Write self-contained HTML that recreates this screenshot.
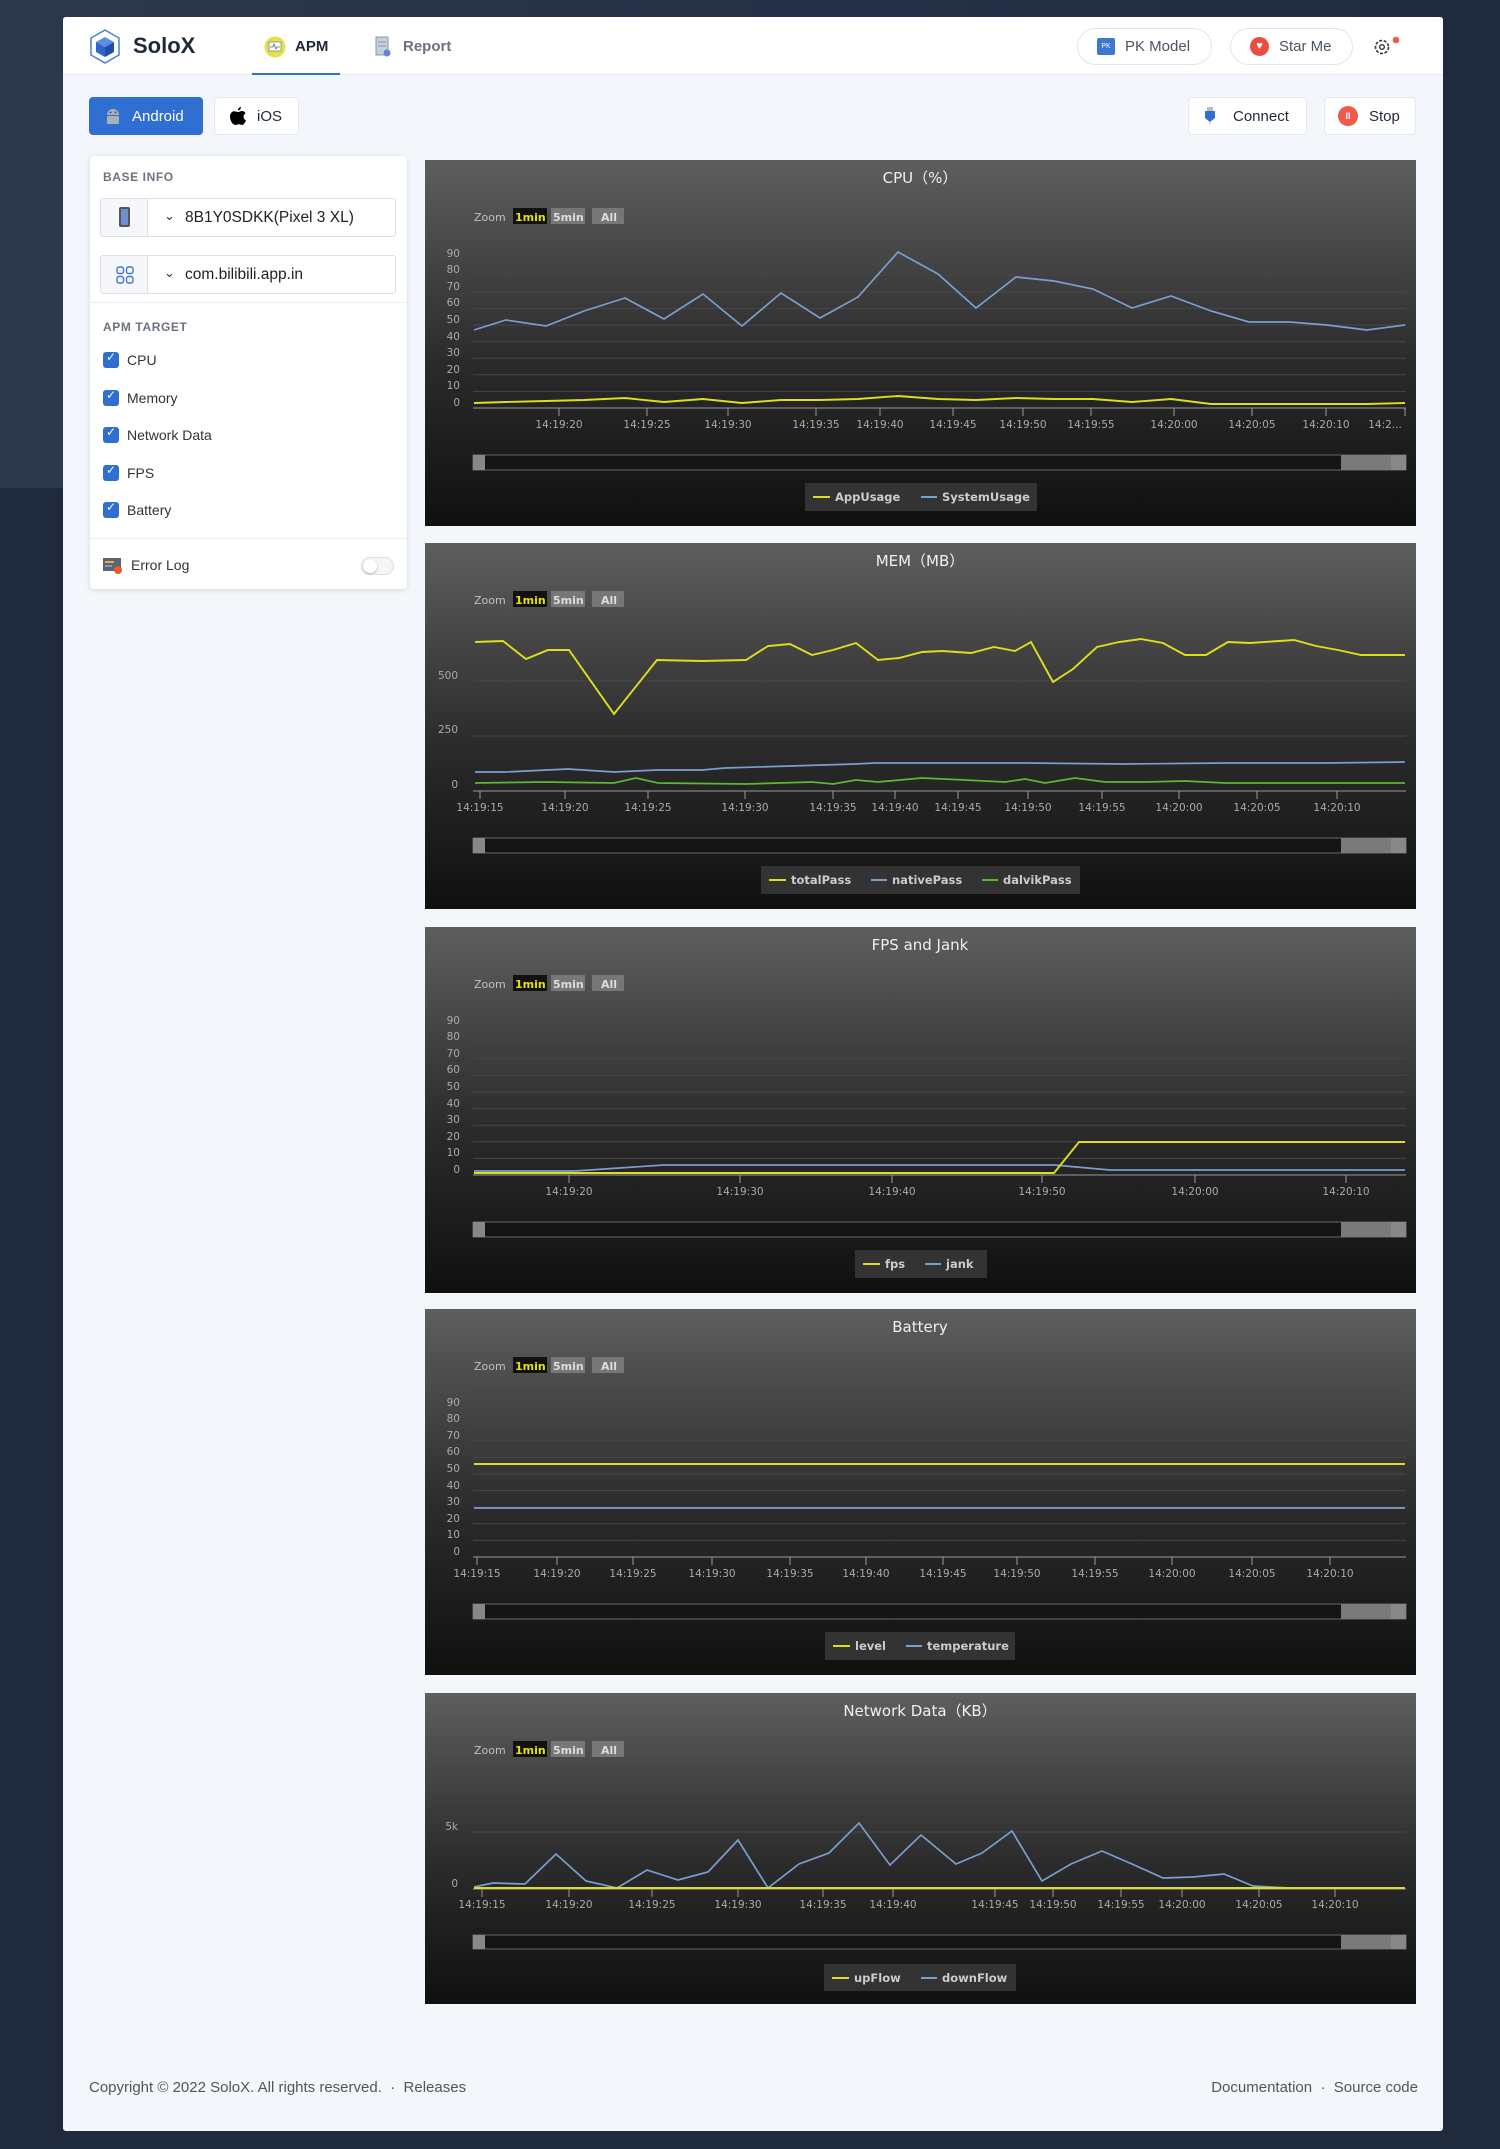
<!DOCTYPE html>
<html><head><meta charset="utf-8"><style>
*{margin:0;padding:0;box-sizing:border-box}
body{width:1500px;height:2149px;background:#1f2a3d;font-family:"Liberation Sans",sans-serif;position:relative;overflow:hidden}
.a{position:absolute}
.card{left:63px;top:17px;width:1380px;height:2114px;background:#f3f6fa;border-radius:3px}
.hdr{left:63px;top:17px;width:1380px;height:58px;background:#fff;border-bottom:1px solid #e8ecf1;border-radius:3px 3px 0 0}
.pill{border:1px solid #e2e5ea;border-radius:19px;background:#fff;height:37px;font-size:15px;color:#4b5563;display:flex;align-items:center}
.btn{height:38px;border:1px solid #e4e7ec;border-radius:4px;background:#fff;font-size:15px;color:#1f2937;display:flex;align-items:center}
.panel{left:90px;top:156px;width:317px;height:433px;background:#fff;border-radius:4px;box-shadow:0 1px 6px rgba(0,0,0,.12)}
.lbl{font-size:12px;color:#6b7280;letter-spacing:.6px;font-weight:bold}
.sel{height:39px;width:296px;border:1px solid #dcdfe6;border-radius:3px;background:#fff}
.sel .ic{position:absolute;left:0;top:0;width:47px;height:37px;background:#f5f7fa;border-right:1px solid #dcdfe6}
.sel .t{position:absolute;left:84px;top:10px;font-size:15.5px;color:#222}
.sel .ch{position:absolute;left:63px;top:9px;font-size:13px;color:#333}
.cb{width:16px;height:16px;background:#2f6fd1;border-radius:3px}
.cbl{font-size:14px;color:#333}
svg text{font-family:"DejaVu Sans",sans-serif}
</style></head><body>
<div class="a" style="left:0;top:0;width:760px;height:488px;background:#2c384b"></div>
<div class="a" style="left:0;top:0;width:1500px;height:17px;background:linear-gradient(90deg,#2c384b,#243045 60%,#1f2a3d)"></div>
<div class="a card"></div>
<div class="a hdr"></div>
<svg class="a" style="left:89px;top:29px" width="32" height="35" viewBox="0 0 32 35"><polygon points="16,1 30,9 30,26 16,34 2,26 2,9" fill="none" stroke="#4a7fd6" stroke-width="1.5"/><polygon points="16,8 25,13 16,18 7,13" fill="#5b8fe0"/><polygon points="7,13 16,18 16,28 7,23" fill="#2f66c8"/><polygon points="25,13 16,18 16,28 25,23" fill="#1f4fa8"/></svg>
<div class="a" style="left:133px;top:33px;font-size:22px;font-weight:bold;color:#1f2937">SoloX</div>
<svg class="a" style="left:264px;top:36px" width="22" height="22"><circle cx="11" cy="11" r="10.5" fill="#e5e04a"/><rect x="5" y="6" width="12" height="9" fill="#fff" stroke="#888" stroke-width=".8"/><polyline points="6,11 9,11 10,8 12,13 13,11 16,11" fill="none" stroke="#666" stroke-width=".8"/></svg>
<div class="a" style="left:295px;top:38px;font-size:15px;font-weight:bold;color:#1f2937">APM</div>
<div class="a" style="left:252px;top:73px;width:88px;height:2px;background:#2f6fd1"></div>
<svg class="a" style="left:375px;top:36px" width="16" height="22"><rect x="1" y="1" width="12" height="18" fill="#c5cfdc" stroke="#8a97a8"/><line x1="3" y1="6" x2="11" y2="6" stroke="#8a97a8"/><line x1="3" y1="10" x2="11" y2="10" stroke="#8a97a8"/><circle cx="12" cy="17" r="3.5" fill="#5d88c9"/></svg>
<div class="a" style="left:403px;top:38px;font-size:15px;font-weight:bold;color:#6b7280">Report</div>
<div class="a pill" style="left:1077px;top:28px;width:135px"><span style="display:inline-block;width:18px;height:17px;background:#3d78d0;border-radius:2px;margin-left:19px;margin-right:10px;color:#fff;font-size:7px;text-align:center;line-height:17px">PK</span>PK Model</div>
<div class="a pill" style="left:1230px;top:28px;width:123px"><span style="display:inline-block;width:19px;height:19px;background:#e94d40;border-radius:50%;margin-left:19px;margin-right:10px;color:#fff;font-size:11px;text-align:center;line-height:19px">♥</span>Star Me</div>
<svg class="a" style="left:1372px;top:35px" width="30" height="24"><circle cx="10" cy="12" r="6.5" fill="none" stroke="#333" stroke-width="1.6" stroke-dasharray="3 1.6"/><circle cx="10" cy="12" r="2.3" fill="none" stroke="#333" stroke-width="1.4"/><circle cx="24" cy="5" r="3.3" fill="#ef5a4c"/></svg>
<div class="a btn" style="left:89px;top:97px;width:114px;background:#2f6fd1;border-color:#2f6fd1;color:#fff"><svg style="margin:0 11px 0 15px" width="16" height="20"><path d="M2 9a6 6 0 0 1 12 0z" fill="#a8b0b8"/><rect x="2" y="10" width="12" height="8" rx="1" fill="#a8b0b8"/><circle cx="5.5" cy="6.5" r="1" fill="#555"/><circle cx="10.5" cy="6.5" r="1" fill="#555"/></svg>Android</div>
<div class="a btn" style="left:214px;top:97px;width:85px"><svg style="margin:0 10px 0 14px" width="18" height="20" viewBox="0 0 18 20"><path d="M12 1c0 2-1.5 3.5-3 3.5C9 2.5 10.5 1 12 1zM9 6c1.5 0 2.5-1 4-1 1.5 0 3 1 3.6 2.3-3 1.5-2.5 6 .4 7-.7 2-2.2 4.7-4 4.7-1.3 0-1.8-.8-3.2-.8s-2 .8-3.3.8C3.5 19 1 14.5 1 10.5 1 7.5 3 5.3 5.2 5.3 6.8 5.3 7.7 6 9 6z" fill="#000"/></svg>iOS</div>
<div class="a btn" style="left:1188px;top:97px;width:119px"><svg style="margin:0 17px 0 15px" width="12" height="20"><rect x="3" y="1" width="6" height="4" fill="#bbb"/><path d="M1 5h10v7l-5 4-5-4z" fill="#2f6fd1"/><path d="M6 16v3" stroke="#bbb"/></svg>Connect</div>
<div class="a btn" style="left:1324px;top:97px;width:92px"><span style="display:inline-block;width:20px;height:20px;background:#ef5a4c;border-radius:50%;margin:0 11px 0 13px;color:#fff;font-size:9px;text-align:center;line-height:20px;font-weight:bold">II</span>Stop</div>
<div class="a panel"></div>
<div class="a lbl" style="left:103px;top:170px">BASE INFO</div>
<div class="a sel" style="left:100px;top:198px"><div class="ic"><div style="position:absolute;left:18px;top:8px;width:11px;height:20px;background:#6c90cc;border:2px solid #555;border-radius:2px"></div></div><span class="ch">⌄</span><span class="t">8B1Y0SDKK(Pixel 3 XL)</span></div>
<div class="a sel" style="left:100px;top:255px"><div class="ic"><svg style="position:absolute;left:15px;top:10px" width="18" height="18"><g fill="none" stroke="#3d78d0" stroke-width="1.4"><rect x="1" y="1" width="6.5" height="6.5" rx="2"/><rect x="10.5" y="1" width="6.5" height="6.5" rx="2"/><rect x="1" y="10.5" width="6.5" height="6.5" rx="2"/><rect x="10.5" y="10.5" width="6.5" height="6.5" rx="2"/></g></svg></div><span class="ch">⌄</span><span class="t">com.bilibili.app.in</span></div>
<div class="a" style="left:90px;top:302px;width:317px;height:1px;background:#eceef2"></div>
<div class="a lbl" style="left:103px;top:320px">APM TARGET</div>
<div class="a cb" style="left:103px;top:352px"></div><div class="a" style="left:106px;top:350px;color:#fff;font-size:12px">✓</div><div class="a cbl" style="left:127px;top:352px">CPU</div>
<div class="a cb" style="left:103px;top:390px"></div><div class="a" style="left:106px;top:388px;color:#fff;font-size:12px">✓</div><div class="a cbl" style="left:127px;top:390px">Memory</div>
<div class="a cb" style="left:103px;top:427px"></div><div class="a" style="left:106px;top:425px;color:#fff;font-size:12px">✓</div><div class="a cbl" style="left:127px;top:427px">Network Data</div>
<div class="a cb" style="left:103px;top:465px"></div><div class="a" style="left:106px;top:463px;color:#fff;font-size:12px">✓</div><div class="a cbl" style="left:127px;top:465px">FPS</div>
<div class="a cb" style="left:103px;top:502px"></div><div class="a" style="left:106px;top:500px;color:#fff;font-size:12px">✓</div><div class="a cbl" style="left:127px;top:502px">Battery</div>
<div class="a" style="left:90px;top:538px;width:317px;height:1px;background:#eceef2"></div>
<svg class="a" style="left:103px;top:558px" width="20" height="16"><rect x="0" y="0" width="18" height="13" fill="#5b6470"/><rect x="2" y="3" width="9" height="2" fill="#e0b050"/><rect x="2" y="7" width="7" height="2" fill="#7aa0d0"/><circle cx="15" cy="12" r="4" fill="#ee5533"/></svg>
<div class="a cbl" style="left:131px;top:557px">Error Log</div>
<div class="a" style="left:361px;top:557px;width:33px;height:18px;border:1px solid #dcdfe6;border-radius:9px;background:#f4f5f7"><div style="position:absolute;left:1px;top:1px;width:14px;height:14px;border-radius:50%;background:#fff;box-shadow:0 1px 2px rgba(0,0,0,.25)"></div></div>

<svg width="0" height="0" style="position:absolute"><defs><linearGradient id="bg" x1="0" y1="0" x2="0" y2="1"><stop offset="0" stop-color="#5e5e5e"/><stop offset=".55" stop-color="#2b2b2b"/><stop offset="1" stop-color="#101010"/></linearGradient></defs></svg>

<svg class="a" style="left:425px;top:160px" width="991" height="366">
<rect width="991" height="366" fill="url(#bg)"/>
<text x="495" y="23" fill="#f0f0f0" font-size="15" text-anchor="middle">CPU（%）</text>
<text x="49" y="61" fill="#c0c0c0" font-size="11">Zoom</text>
<rect x="88" y="48" width="34" height="16" fill="#111"/><text x="90" y="61" fill="#e5e500" font-size="11" font-weight="bold">1min</text>
<rect x="126" y="48" width="34" height="16" fill="#777"/><text x="128" y="61" fill="#ddd" font-size="11" font-weight="bold">5min</text>
<rect x="167" y="48" width="32" height="16" fill="#777"/><text x="176" y="61" fill="#ddd" font-size="11" font-weight="bold">All</text>
<g stroke="#474747" stroke-width="1"><line x1="48" x2="981" y1="82" y2="82"/><line x1="48" x2="981" y1="98.6" y2="98.6"/><line x1="48" x2="981" y1="115.2" y2="115.2"/><line x1="48" x2="981" y1="131.8" y2="131.8"/><line x1="48" x2="981" y1="148.4" y2="148.4"/><line x1="48" x2="981" y1="165" y2="165"/><line x1="48" x2="981" y1="181.6" y2="181.6"/><line x1="48" x2="981" y1="198.2" y2="198.2"/><line x1="48" x2="981" y1="214.8" y2="214.8"/><line x1="48" x2="981" y1="231.4" y2="231.4"/></g>
<g fill="#aaa" font-size="10.5" text-anchor="end"><text x="35" y="97">90</text><text x="35" y="113">80</text><text x="35" y="130">70</text><text x="35" y="146">60</text><text x="35" y="163">50</text><text x="35" y="180">40</text><text x="35" y="196">30</text><text x="35" y="213">20</text><text x="35" y="229">10</text><text x="35" y="246">0</text></g>
<line x1="48" x2="981" y1="248" y2="248" stroke="#999"/>
<g stroke="#999"><line x1="134" x2="134" y1="248" y2="256"/><line x1="222" x2="222" y1="248" y2="256"/><line x1="303" x2="303" y1="248" y2="256"/><line x1="391" x2="391" y1="248" y2="256"/><line x1="455" x2="455" y1="248" y2="256"/><line x1="528" x2="528" y1="248" y2="256"/><line x1="598" x2="598" y1="248" y2="256"/><line x1="666" x2="666" y1="248" y2="256"/><line x1="749" x2="749" y1="248" y2="256"/><line x1="827" x2="827" y1="248" y2="256"/><line x1="901" x2="901" y1="248" y2="256"/><line x1="980" x2="980" y1="248" y2="256"/></g>
<g fill="#aaa" font-size="10.5" text-anchor="middle"><text x="134" y="268">14:19:20</text><text x="222" y="268">14:19:25</text><text x="303" y="268">14:19:30</text><text x="391" y="268">14:19:35</text><text x="455" y="268">14:19:40</text><text x="528" y="268">14:19:45</text><text x="598" y="268">14:19:50</text><text x="666" y="268">14:19:55</text><text x="749" y="268">14:20:00</text><text x="827" y="268">14:20:05</text><text x="901" y="268">14:20:10</text><text x="960" y="268">14:2...</text></g>
<polyline fill="none" stroke="#7a9fcf" stroke-width="1.7" points="49,170 81,160 121,166 159,151 200,138 239,159 278,134 317,166 356,133 395,158 433,137 473,92 513,114 551,148 591,117 629,121 668,129 707,148 746,136 786,151 824,162 864,162 902,165 942,170 980,165"/>
<polyline fill="none" stroke="#dede1c" stroke-width="1.9" points="49,243 81,242 121,241 159,240 200,238 239,242 278,239 317,243 356,240 395,240 433,239 473,236 513,239 551,240 591,238 629,239 668,239 707,242 746,239 786,244 824,244 864,244 902,244 942,244 980,243"/>
<rect x="48" y="295" width="933" height="15" fill="#151515" stroke="#666"/><rect x="48" y="295" width="12" height="15" fill="#888"/><rect x="916" y="295" width="50" height="15" fill="#7a7a7a"/><rect x="966" y="295" width="15" height="15" fill="#888"/>
<rect x="380" y="323" width="232" height="28" fill="#333"/><line x1="388" x2="405" y1="337" y2="337" stroke="#dede1c" stroke-width="2"/><text x="410" y="341" fill="#ccc" font-size="11.5" font-weight="bold">AppUsage</text><line x1="496" x2="512" y1="337" y2="337" stroke="#7a9fcf" stroke-width="2"/><text x="517" y="341" fill="#ccc" font-size="11.5" font-weight="bold">SystemUsage</text>
</svg>

<svg class="a" style="left:425px;top:543px" width="991" height="366">
<rect width="991" height="366" fill="url(#bg)"/>
<text x="495" y="23" fill="#f0f0f0" font-size="15" text-anchor="middle">MEM（MB）</text>
<text x="49" y="61" fill="#c0c0c0" font-size="11">Zoom</text>
<rect x="88" y="48" width="34" height="16" fill="#111"/><text x="90" y="61" fill="#e5e500" font-size="11" font-weight="bold">1min</text>
<rect x="126" y="48" width="34" height="16" fill="#777"/><text x="128" y="61" fill="#ddd" font-size="11" font-weight="bold">5min</text>
<rect x="167" y="48" width="32" height="16" fill="#777"/><text x="176" y="61" fill="#ddd" font-size="11" font-weight="bold">All</text>
<g stroke="#474747"><line x1="48" x2="981" y1="82" y2="82"/><line x1="48" x2="981" y1="138" y2="138"/><line x1="48" x2="981" y1="193" y2="193"/></g>
<g fill="#aaa" font-size="10.5" text-anchor="end"><text x="33" y="136">500</text><text x="33" y="190">250</text><text x="33" y="245">0</text></g>
<line x1="48" x2="981" y1="248" y2="248" stroke="#999"/>
<g stroke="#999"><line x1="55" x2="55" y1="248" y2="256"/><line x1="140" x2="140" y1="248" y2="256"/><line x1="223" x2="223" y1="248" y2="256"/><line x1="320" x2="320" y1="248" y2="256"/><line x1="408" x2="408" y1="248" y2="256"/><line x1="470" x2="470" y1="248" y2="256"/><line x1="533" x2="533" y1="248" y2="256"/><line x1="603" x2="603" y1="248" y2="256"/><line x1="677" x2="677" y1="248" y2="256"/><line x1="754" x2="754" y1="248" y2="256"/><line x1="832" x2="832" y1="248" y2="256"/><line x1="912" x2="912" y1="248" y2="256"/></g>
<g fill="#aaa" font-size="10.5" text-anchor="middle"><text x="55" y="268">14:19:15</text><text x="140" y="268">14:19:20</text><text x="223" y="268">14:19:25</text><text x="320" y="268">14:19:30</text><text x="408" y="268">14:19:35</text><text x="470" y="268">14:19:40</text><text x="533" y="268">14:19:45</text><text x="603" y="268">14:19:50</text><text x="677" y="268">14:19:55</text><text x="754" y="268">14:20:00</text><text x="832" y="268">14:20:05</text><text x="912" y="268">14:20:10</text></g>
<polyline fill="none" stroke="#dede1c" stroke-width="1.9" points="50,99 78,98 101,116 123,107 144,107 189,171 232,117 277,118 321,117 343,103 365,101 387,112 408,107 431,100 453,117 474,115 497,109 517,108 546,110 569,104 590,108 606,99 628,139 648,126 672,104 694,99 716,96 738,100 760,112 781,112 803,99 825,100 869,97 891,103 913,107 936,112 980,112"/>
<polyline fill="none" stroke="#7a9fcf" stroke-width="1.7" points="50,229 80,229 143,226 189,229 232,227 277,227 300,225 430,221 450,220 600,220 700,221 800,220 900,220 980,219"/>
<polyline fill="none" stroke="#5bb832" stroke-width="1.7" points="50,240 120,239 189,240 211,235 233,240 321,241 387,239 408,241 431,237 453,239 497,235 540,237 580,239 600,236 620,240 650,235 680,239 720,239 760,238 800,240 980,240"/>
<rect x="48" y="295" width="933" height="15" fill="#151515" stroke="#666"/><rect x="48" y="295" width="12" height="15" fill="#888"/><rect x="916" y="295" width="50" height="15" fill="#7a7a7a"/><rect x="966" y="295" width="15" height="15" fill="#888"/>
<rect x="336" y="323" width="319" height="28" fill="#333"/><line x1="344" x2="361" y1="337" y2="337" stroke="#dede1c" stroke-width="2"/><text x="366" y="341" fill="#ccc" font-size="11.5" font-weight="bold">totalPass</text><line x1="446" x2="462" y1="337" y2="337" stroke="#7a9fcf" stroke-width="2"/><text x="467" y="341" fill="#ccc" font-size="11.5" font-weight="bold">nativePass</text><line x1="557" x2="573" y1="337" y2="337" stroke="#5bb832" stroke-width="2"/><text x="578" y="341" fill="#ccc" font-size="11.5" font-weight="bold">dalvikPass</text>
</svg>

<svg class="a" style="left:425px;top:927px" width="991" height="366">
<rect width="991" height="366" fill="url(#bg)"/>
<text x="495" y="23" fill="#f0f0f0" font-size="15" text-anchor="middle">FPS and Jank</text>
<text x="49" y="61" fill="#c0c0c0" font-size="11">Zoom</text>
<rect x="88" y="48" width="34" height="16" fill="#111"/><text x="90" y="61" fill="#e5e500" font-size="11" font-weight="bold">1min</text>
<rect x="126" y="48" width="34" height="16" fill="#777"/><text x="128" y="61" fill="#ddd" font-size="11" font-weight="bold">5min</text>
<rect x="167" y="48" width="32" height="16" fill="#777"/><text x="176" y="61" fill="#ddd" font-size="11" font-weight="bold">All</text>
<g stroke="#474747"><line x1="48" x2="981" y1="82" y2="82"/><line x1="48" x2="981" y1="98.6" y2="98.6"/><line x1="48" x2="981" y1="115.2" y2="115.2"/><line x1="48" x2="981" y1="131.8" y2="131.8"/><line x1="48" x2="981" y1="148.4" y2="148.4"/><line x1="48" x2="981" y1="165" y2="165"/><line x1="48" x2="981" y1="181.6" y2="181.6"/><line x1="48" x2="981" y1="198.2" y2="198.2"/><line x1="48" x2="981" y1="214.8" y2="214.8"/><line x1="48" x2="981" y1="231.4" y2="231.4"/></g>
<g fill="#aaa" font-size="10.5" text-anchor="end"><text x="35" y="97">90</text><text x="35" y="113">80</text><text x="35" y="130">70</text><text x="35" y="146">60</text><text x="35" y="163">50</text><text x="35" y="180">40</text><text x="35" y="196">30</text><text x="35" y="213">20</text><text x="35" y="229">10</text><text x="35" y="246">0</text></g>
<line x1="48" x2="981" y1="248" y2="248" stroke="#999"/>
<g stroke="#999"><line x1="144" x2="144" y1="248" y2="256"/><line x1="315" x2="315" y1="248" y2="256"/><line x1="467" x2="467" y1="248" y2="256"/><line x1="617" x2="617" y1="248" y2="256"/><line x1="770" x2="770" y1="248" y2="256"/><line x1="921" x2="921" y1="248" y2="256"/></g>
<g fill="#aaa" font-size="10.5" text-anchor="middle"><text x="144" y="268">14:19:20</text><text x="315" y="268">14:19:30</text><text x="467" y="268">14:19:40</text><text x="617" y="268">14:19:50</text><text x="770" y="268">14:20:00</text><text x="921" y="268">14:20:10</text></g>
<polyline fill="none" stroke="#7a9fcf" stroke-width="1.7" points="49,244 150,244 239,238 629,238 685,243 980,243"/>
<polyline fill="none" stroke="#dede1c" stroke-width="1.9" points="49,246 629,246 654,215 980,215"/>
<rect x="48" y="295" width="933" height="15" fill="#151515" stroke="#666"/><rect x="48" y="295" width="12" height="15" fill="#888"/><rect x="916" y="295" width="50" height="15" fill="#7a7a7a"/><rect x="966" y="295" width="15" height="15" fill="#888"/>
<rect x="430" y="323" width="132" height="28" fill="#333"/><line x1="438" x2="455" y1="337" y2="337" stroke="#dede1c" stroke-width="2"/><text x="460" y="341" fill="#ccc" font-size="11.5" font-weight="bold">fps</text><line x1="500" x2="516" y1="337" y2="337" stroke="#7a9fcf" stroke-width="2"/><text x="521" y="341" fill="#ccc" font-size="11.5" font-weight="bold">jank</text>
</svg>

<svg class="a" style="left:425px;top:1309px" width="991" height="366">
<rect width="991" height="366" fill="url(#bg)"/>
<text x="495" y="23" fill="#f0f0f0" font-size="15" text-anchor="middle">Battery</text>
<text x="49" y="61" fill="#c0c0c0" font-size="11">Zoom</text>
<rect x="88" y="48" width="34" height="16" fill="#111"/><text x="90" y="61" fill="#e5e500" font-size="11" font-weight="bold">1min</text>
<rect x="126" y="48" width="34" height="16" fill="#777"/><text x="128" y="61" fill="#ddd" font-size="11" font-weight="bold">5min</text>
<rect x="167" y="48" width="32" height="16" fill="#777"/><text x="176" y="61" fill="#ddd" font-size="11" font-weight="bold">All</text>
<g stroke="#474747"><line x1="48" x2="981" y1="82" y2="82"/><line x1="48" x2="981" y1="98.6" y2="98.6"/><line x1="48" x2="981" y1="115.2" y2="115.2"/><line x1="48" x2="981" y1="131.8" y2="131.8"/><line x1="48" x2="981" y1="148.4" y2="148.4"/><line x1="48" x2="981" y1="165" y2="165"/><line x1="48" x2="981" y1="181.6" y2="181.6"/><line x1="48" x2="981" y1="198.2" y2="198.2"/><line x1="48" x2="981" y1="214.8" y2="214.8"/><line x1="48" x2="981" y1="231.4" y2="231.4"/></g>
<g fill="#aaa" font-size="10.5" text-anchor="end"><text x="35" y="97">90</text><text x="35" y="113">80</text><text x="35" y="130">70</text><text x="35" y="146">60</text><text x="35" y="163">50</text><text x="35" y="180">40</text><text x="35" y="196">30</text><text x="35" y="213">20</text><text x="35" y="229">10</text><text x="35" y="246">0</text></g>
<line x1="48" x2="981" y1="248" y2="248" stroke="#999"/>
<g stroke="#999"><line x1="52" x2="52" y1="248" y2="256"/><line x1="132" x2="132" y1="248" y2="256"/><line x1="208" x2="208" y1="248" y2="256"/><line x1="287" x2="287" y1="248" y2="256"/><line x1="365" x2="365" y1="248" y2="256"/><line x1="441" x2="441" y1="248" y2="256"/><line x1="518" x2="518" y1="248" y2="256"/><line x1="592" x2="592" y1="248" y2="256"/><line x1="670" x2="670" y1="248" y2="256"/><line x1="747" x2="747" y1="248" y2="256"/><line x1="827" x2="827" y1="248" y2="256"/><line x1="905" x2="905" y1="248" y2="256"/></g>
<g fill="#aaa" font-size="10.5" text-anchor="middle"><text x="52" y="268">14:19:15</text><text x="132" y="268">14:19:20</text><text x="208" y="268">14:19:25</text><text x="287" y="268">14:19:30</text><text x="365" y="268">14:19:35</text><text x="441" y="268">14:19:40</text><text x="518" y="268">14:19:45</text><text x="592" y="268">14:19:50</text><text x="670" y="268">14:19:55</text><text x="747" y="268">14:20:00</text><text x="827" y="268">14:20:05</text><text x="905" y="268">14:20:10</text></g>
<line x1="49" x2="980" y1="155" y2="155" stroke="#dede1c" stroke-width="1.9"/>
<line x1="49" x2="980" y1="199" y2="199" stroke="#7a9fcf" stroke-width="1.7"/>
<rect x="48" y="295" width="933" height="15" fill="#151515" stroke="#666"/><rect x="48" y="295" width="12" height="15" fill="#888"/><rect x="916" y="295" width="50" height="15" fill="#7a7a7a"/><rect x="966" y="295" width="15" height="15" fill="#888"/>
<rect x="400" y="323" width="190" height="28" fill="#333"/><line x1="408" x2="425" y1="337" y2="337" stroke="#dede1c" stroke-width="2"/><text x="430" y="341" fill="#ccc" font-size="11.5" font-weight="bold">level</text><line x1="481" x2="497" y1="337" y2="337" stroke="#7a9fcf" stroke-width="2"/><text x="502" y="341" fill="#ccc" font-size="11.5" font-weight="bold">temperature</text>
</svg>

<svg class="a" style="left:425px;top:1693px" width="991" height="311">
<rect width="991" height="311" fill="url(#bg)"/>
<text x="495" y="23" fill="#f0f0f0" font-size="15" text-anchor="middle">Network Data（KB）</text>
<text x="49" y="61" fill="#c0c0c0" font-size="11">Zoom</text>
<rect x="88" y="48" width="34" height="16" fill="#111"/><text x="90" y="61" fill="#e5e500" font-size="11" font-weight="bold">1min</text>
<rect x="126" y="48" width="34" height="16" fill="#777"/><text x="128" y="61" fill="#ddd" font-size="11" font-weight="bold">5min</text>
<rect x="167" y="48" width="32" height="16" fill="#777"/><text x="176" y="61" fill="#ddd" font-size="11" font-weight="bold">All</text>
<g stroke="#474747"><line x1="48" x2="981" y1="81" y2="81"/><line x1="48" x2="981" y1="139" y2="139"/></g>
<g fill="#aaa" font-size="10.5" text-anchor="end"><text x="33" y="137">5k</text><text x="33" y="194">0</text></g>
<line x1="48" x2="981" y1="196" y2="196" stroke="#999"/>
<g stroke="#999"><line x1="57" x2="57" y1="196" y2="204"/><line x1="144" x2="144" y1="196" y2="204"/><line x1="227" x2="227" y1="196" y2="204"/><line x1="313" x2="313" y1="196" y2="204"/><line x1="398" x2="398" y1="196" y2="204"/><line x1="468" x2="468" y1="196" y2="204"/><line x1="570" x2="570" y1="196" y2="204"/><line x1="628" x2="628" y1="196" y2="204"/><line x1="696" x2="696" y1="196" y2="204"/><line x1="757" x2="757" y1="196" y2="204"/><line x1="834" x2="834" y1="196" y2="204"/><line x1="910" x2="910" y1="196" y2="204"/></g>
<g fill="#aaa" font-size="10.5" text-anchor="middle"><text x="57" y="215">14:19:15</text><text x="144" y="215">14:19:20</text><text x="227" y="215">14:19:25</text><text x="313" y="215">14:19:30</text><text x="398" y="215">14:19:35</text><text x="468" y="215">14:19:40</text><text x="570" y="215">14:19:45</text><text x="628" y="215">14:19:50</text><text x="696" y="215">14:19:55</text><text x="757" y="215">14:20:00</text><text x="834" y="215">14:20:05</text><text x="910" y="215">14:20:10</text></g>
<polyline fill="none" stroke="#7a9fcf" stroke-width="1.7" points="49,194 68,190 100,191 131,161 161,188 192,195 222,177 253,187 283,179 313,147 343,195 374,171 404,160 434,130 465,172 496,142 531,171 557,160 587,138 617,188 646,171 677,158 707,171 738,185 768,184 799,181 828,193 864,195 980,195"/>
<polyline fill="none" stroke="#dede1c" stroke-width="1.9" points="49,195 980,195"/>
<rect x="48" y="242" width="933" height="14" fill="#151515" stroke="#666"/><rect x="48" y="242" width="12" height="14" fill="#888"/><rect x="916" y="242" width="50" height="14" fill="#7a7a7a"/><rect x="966" y="242" width="15" height="14" fill="#888"/>
<rect x="399" y="271" width="192" height="27" fill="#333"/><line x1="407" x2="424" y1="285" y2="285" stroke="#dede1c" stroke-width="2"/><text x="429" y="289" fill="#ccc" font-size="11.5" font-weight="bold">upFlow</text><line x1="496" x2="512" y1="285" y2="285" stroke="#7a9fcf" stroke-width="2"/><text x="517" y="289" fill="#ccc" font-size="11.5" font-weight="bold">downFlow</text>
</svg>

<div class="a" style="left:89px;top:2079px;font-size:15px;color:#555">Copyright © 2022 SoloX. All rights reserved. &nbsp;· &nbsp;Releases</div>
<div class="a" style="left:1100px;top:2079px;width:318px;text-align:right;font-size:15px;color:#555">Documentation &nbsp;· &nbsp;Source code</div>
</body></html>
